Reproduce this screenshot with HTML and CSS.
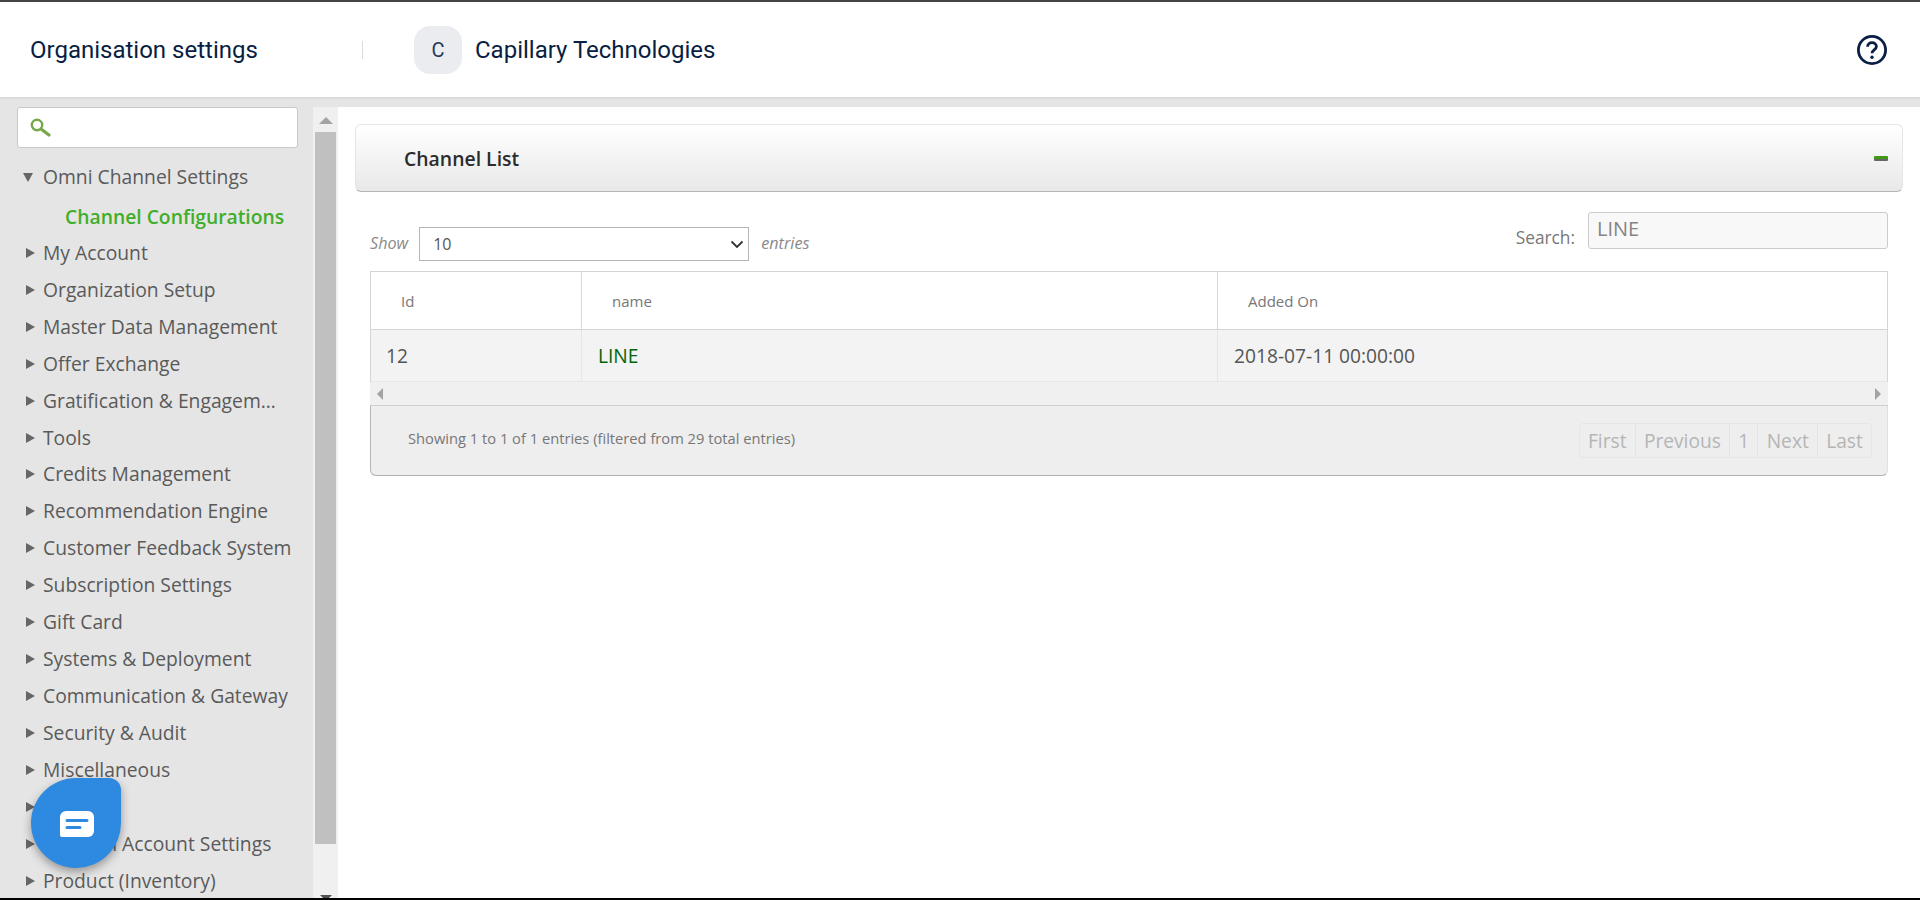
FILE: index.html
```html
<!DOCTYPE html>
<html lang="en">
<head>
<meta charset="utf-8">
<title>Organisation settings</title>
<link rel="stylesheet" href="styles.css">
</head>
<body>
<header class="topbar">
  <div class="org-title">Organisation settings</div>
  <div class="divider"></div>
  <div class="avatar">C</div>
  <div class="org-name">Capillary Technologies</div>
  <svg class="help" viewBox="0 0 30 30" width="30" height="30" fill="none" stroke="#0b1f44">
    <circle cx="15" cy="15" r="13.6" stroke-width="2.8"/>
    <path d="M10.6 11.8c0-2.6 2-4.2 4.4-4.2s4.4 1.6 4.4 3.9c0 3.3-4.4 3.6-4.4 6.8" stroke-width="2.8"/>
    <circle cx="15" cy="22.2" r="1.7" fill="#0b1f44" stroke="none"/>
  </svg>
</header>
<div class="strip"></div>
<div class="main">
  <aside class="sidebar">
    <div class="side-search">
      <svg viewBox="0 0 26 22" width="26" height="22" fill="none">
        <circle cx="9" cy="8" r="5.2" stroke="#74a84a" stroke-width="2.4"/>
        <path d="M13 12l8 6" stroke="#74a84a" stroke-width="3.2" stroke-linecap="round"/>
      </svg>
    </div>
    <ul class="tree">
      <li class="node open"><span class="arrow-down"></span>Omni Channel Settings</li>
      <li class="node child">Channel Configurations</li>
      <li class="node"><span class="arrow"></span>My Account</li>
      <li class="node"><span class="arrow"></span>Organization Setup</li>
      <li class="node"><span class="arrow"></span>Master Data Management</li>
      <li class="node"><span class="arrow"></span>Offer Exchange</li>
      <li class="node"><span class="arrow"></span>Gratification &amp; Engagem…</li>
      <li class="node"><span class="arrow"></span>Tools</li>
      <li class="node"><span class="arrow"></span>Credits Management</li>
      <li class="node"><span class="arrow"></span>Recommendation Engine</li>
      <li class="node"><span class="arrow"></span>Customer Feedback System</li>
      <li class="node"><span class="arrow"></span>Subscription Settings</li>
      <li class="node"><span class="arrow"></span>Gift Card</li>
      <li class="node"><span class="arrow"></span>Systems &amp; Deployment</li>
      <li class="node"><span class="arrow"></span>Communication &amp; Gateway</li>
      <li class="node"><span class="arrow"></span>Security &amp; Audit</li>
      <li class="node"><span class="arrow"></span>Miscellaneous</li>
      <li class="node"><span class="arrow"></span>Admin</li>
      <li class="node"><span class="arrow"></span>Channel Account Settings</li>
      <li class="node"><span class="arrow"></span>Product (Inventory)</li>
    </ul>
  </aside>
  <div class="vscroll">
    <span class="v-up"></span>
    <div class="v-thumb"></div>
    <span class="v-down"></span>
  </div>
  <main class="content">
    <section class="panel-head">
      <h2 class="panel-title">Channel List</h2>
      <span class="collapse"></span>
    </section>
    <div class="controls">
      <div class="length">
        <em class="hint">Show</em>
        <div class="select">10
          <svg viewBox="0 0 14 9" width="14" height="9" fill="none"><path d="M1.5 1.5L7 7l5.5-5.5" stroke="#333" stroke-width="1.8"/></svg>
        </div>
        <em class="hint">entries</em>
      </div>
      <div class="filter">
        <span class="filter-label">Search:</span>
        <div class="filter-input">LINE</div>
      </div>
    </div>
    <div class="table">
      <div class="row head">
        <div class="cell c1">Id</div>
        <div class="cell c2">name</div>
        <div class="cell c3">Added On</div>
      </div>
      <div class="row body">
        <div class="cell c1">12</div>
        <div class="cell c2 link">LINE</div>
        <div class="cell c3">2018-07-11 00:00:00</div>
      </div>
    </div>
    <div class="hscroll"><span class="h-left"></span><span class="h-right"></span></div>
    <div class="foot">
      <div class="info">Showing 1 to 1 of 1 entries (filtered from 29 total entries)</div>
      <div class="pager">
        <span class="page">First</span><span class="page">Previous</span><span class="page">1</span><span class="page">Next</span><span class="page">Last</span>
      </div>
    </div>
  </main>
</div>
<div class="chat">
  <svg viewBox="0 0 34 26" width="34" height="26"><path d="M6 0h22a6 6 0 0 1 6 6v14a6 6 0 0 1-6 6H2a2 2 0 0 1-2-2V6a6 6 0 0 1 6-6z" fill="#fff"/><path d="M7 9.500h20M7 16.500h13" stroke="#2e89e0" stroke-width="3" stroke-linecap="round"/></svg>
</div>
<div class="bottom"></div>
</body>
</html>
```
FILE: styles.css
```css
* { box-sizing: border-box; }
html, body { margin: 0; height: 900px; overflow: hidden; background: #fff; }
body { display: flex; flex-direction: column; font-family: "Open Sans", sans-serif; color: #555; }

.topbar { height: 97px; flex: none; border-top: 2px solid #444; display: flex; align-items: center; padding: 0 33px 0 30px; font-family: Roboto, sans-serif; color: #091e42; background: #fff; }
.org-title { width: 332px; font-size: 24px; padding-top: 1px; }
.divider { width: 1px; height: 18px; background: #d8dbe0; margin-right: 51px; }
.avatar { width: 48px; height: 48px; border-radius: 16px; background: #ebecf0; display: flex; align-items: center; justify-content: center; font-size: 20px; color: #253858; margin-right: 13px; }
.org-name { font-size: 24px; flex: 1; padding-top: 1px; }

.strip { height: 10px; flex: none; background: #e5e5e5; border-top: 2px solid #dcdcdc; }
.main { flex: 1; min-height: 0; display: flex; }

.sidebar { width: 313px; flex: none; background: #e5e5e5; padding: 0 15px 0 17px; overflow: hidden; }
.side-search { height: 41px; background: #fff; border: 1px solid #c9c9c9; border-radius: 3px; display: flex; align-items: center; padding-left: 10px; }
.tree { list-style: none; margin: 11px 0 0; padding: 0; }
.node { height: 36.930px; line-height: 36.930px; font-size: 19.300px; color: #5a5a5a; white-space: nowrap; padding-left: 26px; position: relative; }
.open { margin-bottom: 3px; }
.child { height: 36px; line-height: 36.900px; padding-left: 48px; color: #3fae29; font-weight: 600; }
.arrow { position: absolute; left: 9px; top: 13px; border-left: 9px solid #666; border-top: 5.500px solid transparent; border-bottom: 5.500px solid transparent; }
.arrow-down { position: absolute; left: 6px; top: 14px; border-top: 9px solid #666; border-left: 5.500px solid transparent; border-right: 5.500px solid transparent; }

.vscroll { width: 25px; flex: none; background: #f0f0f0; padding: 0 2px; display: flex; flex-direction: column; align-items: center; }
.v-up { flex: none; margin: 10px 0 8px; border-bottom: 7px solid #a3a3a3; border-left: 7px solid transparent; border-right: 7px solid transparent; }
.v-thumb { width: 21px; height: 712px; flex: none; background: #c0c0c0; }
.v-down { flex: none; margin-top: auto; margin-bottom: -1px; border-top: 6px solid #505050; border-left: 6px solid transparent; border-right: 6px solid transparent; }

.content { flex: 1; min-width: 0; padding: 17px 17px 0; }
.panel-head { height: 68px; border: 1px solid #e6e6e6; border-bottom: 1px solid #b5b5b5; border-radius: 6px; background: linear-gradient(#fff, #e8e8e8); display: flex; align-items: center; justify-content: space-between; padding: 0 14px 0 48px; }
.panel-title { margin: 0; font-size: 19.400px; font-weight: 600; color: #2b2b2b; }
.collapse { width: 14px; height: 5px; background: linear-gradient(#3f9a12 60%, #666 60%); border-radius: 1px; }

.controls { display: flex; justify-content: space-between; margin: 19px 15px 0 15px; height: 60px; }
.length { display: flex; align-items: center; height: 34px; margin-top: 16px; }
.hint { font-size: 16.200px; color: #8a8a8a; padding-bottom: 3px; }
.select { width: 330px; height: 34px; margin: 0 12px 0 11px; border: 1px solid #b5b5b5; background: #fff; display: flex; align-items: center; justify-content: space-between; padding: 0 4px 0 13px; font-size: 16px; color: #555; }
.filter { display: flex; align-items: flex-start; margin-top: 1px; }
.filter-label { font-size: 17.300px; color: #777; margin: 14px 13px 0 0; }
.filter-input { width: 300px; height: 37px; background: #f8f8f8; border: 1px solid #ccc; border-radius: 3px; padding: 4px 8px; font-size: 20px; line-height: 24px; color: #858585; }

.table { margin: 0 15px; border-top: 1px solid #d5d5d5; border-left: 1px solid #d5d5d5; border-right: 1px solid #d5d5d5; }
.row { display: grid; grid-template-columns: 210px 636px 1fr; }
.cell { display: flex; align-items: center; }
.cell + .cell { border-left: 1px solid #d8d8d8; }
.head { height: 58px; border-bottom: 1px solid #d5d5d5; font-size: 15px; color: #777; }
.head .cell { padding-left: 30px; }
.body { height: 52px; background: #f3f3f3; font-size: 19.200px; color: #555; border-bottom: 1px solid #e6e6e6; }
.body .cell { padding-left: 15px; }
.body .cell + .cell { border-left-color: #e6e6e6; padding-left: 16px; }
.body .link { color: #00650a; padding-left: 15px; }

.hscroll { margin: 0 15px; height: 24px; background: #f0f0f0; border-bottom: 1px solid #d0d0d0; display: flex; justify-content: space-between; align-items: center; padding: 0 7px; }
.h-left { border-right: 6px solid #a3a3a3; border-top: 6px solid transparent; border-bottom: 6px solid transparent; }
.h-right { border-left: 6px solid #a3a3a3; border-top: 6px solid transparent; border-bottom: 6px solid transparent; }

.foot { margin: 0 15px; height: 70px; background: #eee; border-left: 1px solid #b5b5b5; border-right: 1px solid #e0e0e0; border-bottom: 1px solid #b0b0b0; border-radius: 0 0 6px 6px; display: flex; justify-content: space-between; align-items: flex-start; padding: 17px 15px 0 37px; }
.info { font-size: 14.700px; line-height: 20px; color: #777; margin-top: 5px; }
.pager { display: flex; height: 35px; border: 1px solid #e6e6e6; border-radius: 4px; }
.page { padding: 0 8.200px; font-size: 19.200px; line-height: 33px; color: #b5b5b5; }
.page + .page { border-left: 1px solid #e4e4e4; }

.chat { position: absolute; left: 31px; top: 778px; width: 90px; height: 90px; padding: 2px 0 0 2px; background: #2e89e0; border-radius: 50%; border-top-right-radius: 12px; box-shadow: 0 4px 10px rgba(0,0,0,.35); display: flex; align-items: center; justify-content: center; }
.bottom { position: absolute; left: 0; right: 0; top: 898px; height: 2px; background: #000; }
```
